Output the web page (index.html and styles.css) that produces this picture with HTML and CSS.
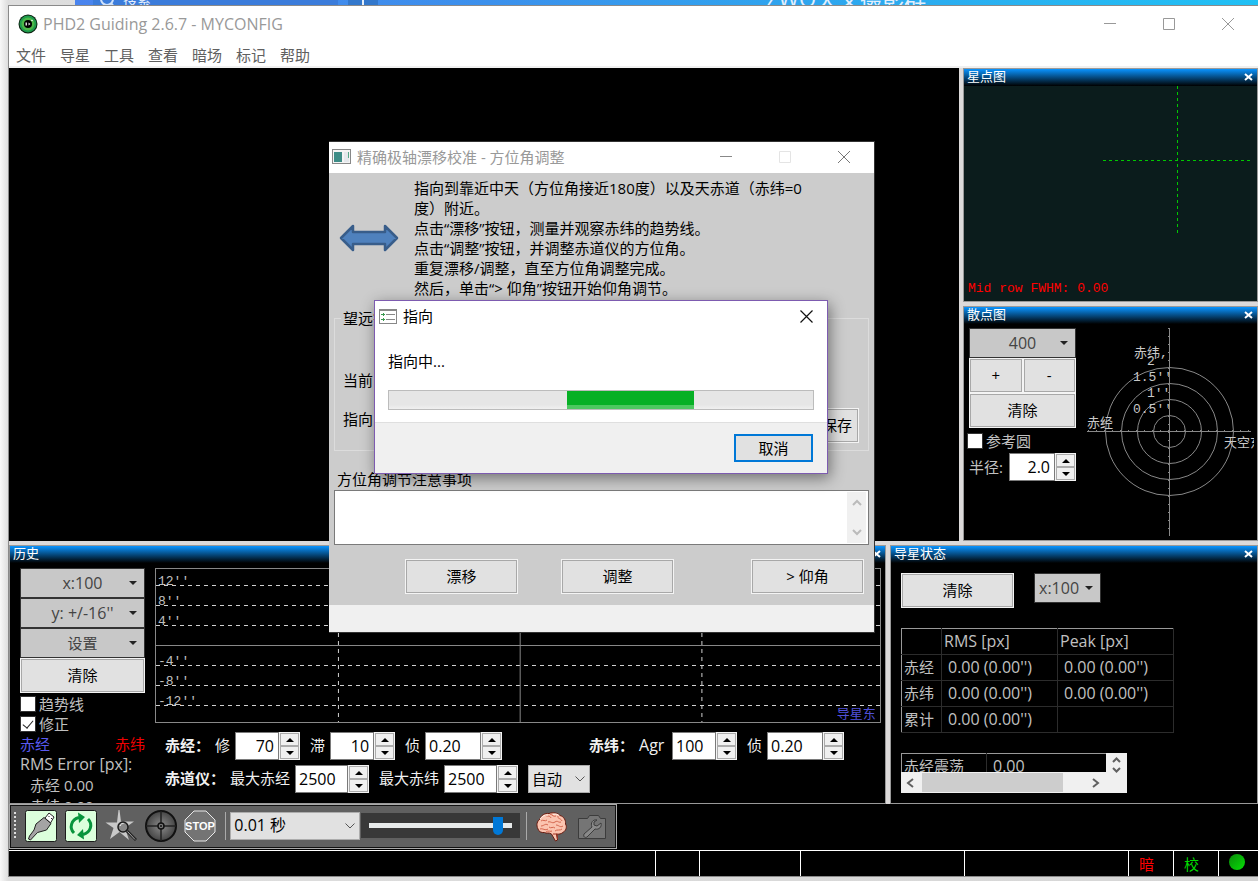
FILE: index.html
```html
<!DOCTYPE html>
<html lang="zh-CN">
<head>
<meta charset="utf-8">
<title>PHD2 Guiding 2.6.7 - MYCONFIG</title>
<link rel="stylesheet" href="styles.css">
</head>
<body>
<div class="backdrop">
  <div class="backdrop-search"><svg width="18" height="18" viewBox="0 0 18 18"><circle cx="8" cy="9" r="6" fill="none" stroke="#cfe2fb" stroke-width="2"/><path d="M12 13l4 5" stroke="#cfe2fb" stroke-width="2"/></svg><span>搜索</span></div>
  <div class="backdrop-plus"></div>
  <div class="backdrop-title">ZWO天文摄影群</div>
</div>

<main class="window">
  <header class="titlebar">
    <svg class="app-icon" width="20" height="20" viewBox="0 0 20 20"><circle cx="10" cy="10" r="9.5" fill="#0c1f10"/><circle cx="10" cy="10" r="8.5" fill="#1e9a4c"/><circle cx="10" cy="10" r="6.500" fill="#4cb848"/><circle cx="10" cy="10" r="4" fill="#000"/><path d="M7.500 8.500v3h1.500v-3zM10.500 8.500v3l2-1.500z" fill="#ddd"/><circle cx="14" cy="6.500" r=".8" fill="#fff"/></svg>
    <h1>PHD2 Guiding 2.6.7 - MYCONFIG</h1>
    <div class="window-buttons">
      <button aria-label="最小化"><svg width="12" height="12"><path d="M0 5.500h12" stroke="#999"/></svg></button>
      <button aria-label="最大化"><svg width="12" height="12"><path d="M.5.5h11v11H.5z" stroke="#999" fill="none"/></svg></button>
      <button aria-label="关闭"><svg width="12" height="12"><path d="M0 0l12 12M12 0L0 12" stroke="#999"/></svg></button>
    </div>
  </header>
  <nav class="menubar">
    <button>文件</button><button>导星</button><button>工具</button><button>查看</button><button>暗场</button><button>标记</button><button>帮助</button>
  </nav>

  <div class="dock">
    <div class="dock-top">
      <section class="camera"></section>
      <div class="side">
        <section class="panel">
          <div class="panel-head"><h2>星点图</h2><button class="close" aria-label="关闭"><svg width="9" height="8"><path d="M1 1l7 6M8 1L1 7" stroke="#fff" stroke-width="2"/></svg></button></div>
          <div class="profile">
            <svg class="profile-cross" width="148" height="148"><path d="M74.500 0v148M0 74.500h148" stroke="#00c800" stroke-dasharray="3 3"/></svg>
            <p class="profile-text">Mid row FWHM: 0.00</p>
          </div>
        </section>
        <section class="panel">
          <div class="panel-head"><h2>散点图</h2><button class="close" aria-label="关闭"><svg width="9" height="8"><path d="M1 1l7 6M8 1L1 7" stroke="#fff" stroke-width="2"/></svg></button></div>
          <div class="scatter">
            <div class="scatter-controls">
              <button class="drop">400</button>
              <div class="zoom-pair"><button class="push">+</button><button class="push">-</button></div>
              <button class="push">清除</button>
              <label class="check check-ref"><input type="checkbox">参考圆</label>
              <div class="radius"><label for="radius">半径:</label><span class="spin"><input id="radius" class="w46" value="2.0"><span class="spin-buttons"><button class="up" aria-label="增加"></button><button class="down" aria-label="减少"></button></span></span></div>
            </div>
            <svg class="scatter-plot" width="167" height="211" viewBox="0 4 167 211">
              <g fill="none" stroke="#888"><circle cx="82.500" cy="107.500" r="16"/><circle cx="82.500" cy="107.500" r="32"/><circle cx="82.500" cy="107.500" r="48"/><circle cx="82.500" cy="107.500" r="64"/><path d="M0 107.500h164M82.500 4v208"/><path d="M1 106.500h164" stroke-dasharray="1 7"/><path d="M81.500 4v208" stroke-dasharray="1 7"/></g>
              <g fill="#c8c8c8"><text x="47" y="33">赤纬,</text><text x="60" y="41">2</text><text x="46" y="57">1.5''</text><text x="60" y="73">1''</text><text x="46" y="89">0.5''</text><text x="0" y="103">赤经</text><text x="137" y="123">天空东</text></g>
            </svg>
          </div>
        </section>
      </div>
    </div>

    <div class="dock-bottom">
      <section class="panel">
        <div class="panel-head"><h2>历史</h2><button class="close" aria-label="关闭"><svg width="9" height="8"><path d="M1 1l7 6M8 1L1 7" stroke="#fff" stroke-width="2"/></svg></button></div>
        <div class="history">
          <div class="history-side">
            <button class="drop">x:100</button>
            <button class="drop">y: +/-16''</button>
            <button class="drop zh">设置</button>
            <button class="push">清除</button>
            <label class="check"><input type="checkbox">趋势线</label>
            <label class="check"><input type="checkbox" checked>修正</label>
            <div class="axes"><span class="ra">赤经</span><span class="dec">赤纬</span></div>
            <p class="rms rms-head">RMS Error [px]:</p>
            <p class="rms rms-item">赤经 0.00</p>
            <p class="rms rms-item">赤纬 0.00</p>
          </div>
          <div class="history-main">
            <svg class="graph" width="100%" height="155">
              <g stroke="#d0d0d0" stroke-dasharray="4 4">
                <line x1="0" x2="100%" y1="16.500" y2="16.500"/><line x1="0" x2="100%" y1="36.500" y2="36.500"/><line x1="0" x2="100%" y1="56.500" y2="56.500"/><line x1="0" x2="100%" y1="96.500" y2="96.500"/><line x1="0" x2="100%" y1="116.500" y2="116.500"/><line x1="0" x2="100%" y1="136.500" y2="136.500"/>
                <line x1="25.200%" x2="25.200%" y1="0" y2="155"/><line x1="75.400%" x2="75.400%" y1="0" y2="155"/>
              </g>
              <g stroke="#888"><line x1="0" x2="100%" y1="76.500" y2="76.500"/><line x1="50.300%" x2="50.300%" y1="0" y2="155"/></g>
              <g fill="#c0c0c0"><text x="2" y="16">12''</text><text x="2" y="36">8''</text><text x="2" y="56">4''</text><text x="2" y="96">-4''</text><text x="2" y="116">-8''</text><text x="2" y="136">-12''</text></g>
              <text class="guide-label" x="99.400%" y="149" text-anchor="end" fill="#5050d8">导星东</text>
            </svg>
            <div class="row">
              <strong>赤经：</strong>
              <label for="agr-ra">修</label><span class="spin"><input id="agr-ra" class="w44 right" value="70"><span class="spin-buttons"><button class="up" aria-label="增加"></button><button class="down" aria-label="减少"></button></span></span>
              <label for="hys">滞</label><span class="spin"><input id="hys" class="w44 right" value="10"><span class="spin-buttons"><button class="up" aria-label="增加"></button><button class="down" aria-label="减少"></button></span></span>
              <label for="min-ra">侦</label><span class="spin"><input id="min-ra" class="w56" value="0.20"><span class="spin-buttons"><button class="up" aria-label="增加"></button><button class="down" aria-label="减少"></button></span></span>
              <strong class="dec-group">赤纬：</strong>
              <label class="agr" for="agr-dec">Agr</label><span class="spin"><input id="agr-dec" class="w44" value="100"><span class="spin-buttons"><button class="up" aria-label="增加"></button><button class="down" aria-label="减少"></button></span></span>
              <label for="min-dec">侦</label><span class="spin"><input id="min-dec" class="w56" value="0.20"><span class="spin-buttons"><button class="up" aria-label="增加"></button><button class="down" aria-label="减少"></button></span></span>
            </div>
            <div class="row">
              <strong>赤道仪：</strong>
              <label for="max-ra">最大赤经</label><span class="spin"><input id="max-ra" class="w53" value="2500"><span class="spin-buttons"><button class="up" aria-label="增加"></button><button class="down" aria-label="减少"></button></span></span>
              <label for="max-dec">最大赤纬</label><span class="spin"><input id="max-dec" class="w53" value="2500"><span class="spin-buttons"><button class="up" aria-label="增加"></button><button class="down" aria-label="减少"></button></span></span>
              <span class="combo combo-mode"><select aria-label="赤纬模式"><option>自动</option></select><svg width="10" height="6"><path d="M.5.5L5 5 9.500.5" fill="none" stroke="#555"/></svg></span>
            </div>
          </div>
        </div>
      </section>

      <section class="panel">
        <div class="panel-head"><h2>导星状态</h2><button class="close" aria-label="关闭"><svg width="9" height="8"><path d="M1 1l7 6M8 1L1 7" stroke="#fff" stroke-width="2"/></svg></button></div>
        <div class="stats">
          <div class="stats-buttons"><button class="push">清除</button><button class="drop drop-small">x:100</button></div>
          <table class="stats-table">
            <tr><th></th><th class="latin">RMS [px]</th><th class="latin">Peak [px]</th></tr>
            <tr><th>赤经</th><td>0.00 (0.00'')</td><td>0.00 (0.00'')</td></tr>
            <tr><th>赤纬</th><td>0.00 (0.00'')</td><td>0.00 (0.00'')</td></tr>
            <tr><th>累计</th><td>0.00 (0.00'')</td><td></td></tr>
          </table>
          <div class="osc">
            <div class="osc-view"><table class="osc-table"><tr><th>赤经震荡</th><td>0.00</td></tr></table></div>
            <div class="osc-v"><svg width="9" height="16"><path d="M1 5l3.500-3.500L8 5M1 11l3.500 3.500L8 11" fill="none" stroke="#606060" stroke-width="2"/></svg></div>
            <div class="osc-h"><svg width="8" height="10"><path d="M7 1L2 5l5 4" fill="none" stroke="#606060" stroke-width="2"/></svg><span class="thumb"></span><svg width="8" height="10"><path d="M1 1l5 4-5 4" fill="none" stroke="#606060" stroke-width="2"/></svg></div>
          </div>
        </div>
      </section>
    </div>
  </div>

  <div class="toolbar-area">
    <div class="toolbar">
      <span class="grip"></span>
      <button class="tool" aria-label="连接设备"><svg width="32" height="32" viewBox="0 0 32 32"><rect x=".5" y=".5" width="31" height="31" rx="2" fill="#dcffdc" stroke="#1c1c1c"/><path d="M20 8l4-5 5 4-3.500 6z" fill="#fff" stroke="#222"/><path d="M23.500 6l1 1M26 8l1 1" stroke="#222"/><path d="M11 14l8-6.500 7 6-4.500 6.500-9 2.500-7 7.500-2-1 1-3 4.500-6z" fill="#a4a4a4" stroke="#222" stroke-linejoin="round"/></svg></button>
      <button class="tool" aria-label="循环曝光"><svg width="32" height="32" viewBox="0 0 32 32"><rect x=".5" y=".5" width="31" height="31" rx="2" fill="#dcffdc" stroke="#1c1c1c"/><path d="M9 23C4 18 6 9.500 14 7.500M23 9c5 5 3 13.500-5 15.500" fill="none" stroke="#08943c" stroke-width="3"/><path d="M13 2.500l7 4.500-6 6zM19 29.500l-7-4.500 6-6z" fill="#08943c"/></svg></button>
      <button class="tool" aria-label="自动选星"><svg width="32" height="32" viewBox="0 0 32 32"><path d="M13.500 0h1L16 11.500H29l-9 6.500 4 12-9.500-8L5 29l3.500-11-8-5.500H12z" fill="#c8c8c8"/><path d="M22 21l9 9" stroke="#222" stroke-width="3"/><path d="M22.500 21.500l7.500 8" stroke="#aaa"/><circle cx="18" cy="17" r="5" fill="#888" stroke="#1c1c1c" stroke-width="1.500"/><path d="M15 16c.5-2 2-2.500 3.500-2.500" fill="none" stroke="#fff"/></svg></button>
      <button class="tool" aria-label="开始导星"><svg width="32" height="32" viewBox="0 0 32 32"><defs><radialGradient id="wheel"><stop offset="0" stop-color="#8c8c8c"/><stop offset="1" stop-color="#444"/></radialGradient></defs><circle cx="16" cy="16" r="15" fill="url(#wheel)" stroke="#111" stroke-width="2"/><path d="M16 1v30M1 16h30" stroke="#222" stroke-width="1.500"/><circle cx="16" cy="16" r="3" fill="#777" stroke="#111" stroke-width="1.500"/><circle cx="16" cy="16" r="1" fill="#111"/></svg></button>
      <button class="tool" aria-label="停止"><svg width="32" height="32" viewBox="0 0 32 32"><path d="M10 1h12l9 9v12l-9 9H10l-9-9V10z" fill="#747474" stroke="#e8e8e8"/><text class="stop-text" x="16" y="20" text-anchor="middle">STOP</text></svg></button>
      <span class="sep"></span>
      <span class="combo combo-exposure"><select aria-label="曝光时间"><option>0.01 秒</option></select><svg width="10" height="6"><path d="M.5.5L5 5 9.500.5" fill="none" stroke="#555"/></svg></span>
      <span class="gamma"><input type="range" min="0" max="100" value="93" aria-label="伽马"></span>
      <span class="sep"></span>
      <button class="tool" aria-label="高级设置"><svg width="32" height="32" viewBox="0 0 32 32"><path d="M2 19C0 15 1 11 4 9c1-4 5-6 9-5.500C17 2 22 3 24 5.500c4 1 6 5 5.500 8.500 2 3 0 7-2 8-2 2-5 2.500-7 2l1 6-2 1-4-7c-3-2-5 0-7-1.500-3 .5-6-1-6.500-3.500z" fill="#fbc4b0" stroke="#6a1c10"/><path d="M5 11c2-2 4 1 6-1M9 5c2 2 5 0 6 3M14 4c3 1 3 3 6 2M22 6c-1 3 3 2 4 5M5 16c3 0 4-3 7-1M12 12c3-1 4 2 7 0s3 1 6 0M4 19c3-1 5 2 8 0M13 17c2 2 4-1 6 1M20 15c3 0 4 3 7 1M10 22c2-2 5 0 6-1M19 21c2-2 5 0 7-2" fill="none" stroke="#d4664e"/><path d="M4 9c2-3 5-4 8-4M17 4.500c3-1 5 0 6 1" fill="none" stroke="#fff0e8"/><path d="M17 24l4 0 .5 5" fill="none" stroke="#a03020"/></svg></button>
      <button class="tool" aria-label="相机设置"><svg width="32" height="32" viewBox="0 0 32 32"><path d="M2.500 8.500h9l2-3h9l2 3h5v20h-27z" fill="#757575" stroke="#3c3c3c"/><path d="M21 10c-4-1-7 3-5 7l-8 7c-1 3 1 4 3 3l8-8c4 1 7-2 6-6l-4 3-3-1v-3z" fill="#8a8a8a" stroke="#3c3c3c"/></svg></button>
    </div>
  </div>

  <footer class="statusbar">
    <span class="s-main"></span><span class="s44"></span><span class="s101"></span><span class="s164"></span><span class="s164"></span><span class="s45 dark-flag">暗</span><span class="s45 cal-flag">校</span><span class="s39"><i class="lamp"></i></span>
  </footer>
</main>

<section class="drift" role="dialog" aria-label="精确极轴漂移校准">
  <header class="dialog-title">
    <svg width="20" height="16" viewBox="0 0 20 16"><rect x=".5" y=".5" width="18" height="14" fill="#f4f4f4" stroke="#888"/><rect x="2" y="3" width="8" height="10" fill="#3d8c86"/><rect x="12" y="3" width="5" height="10" fill="#e4e8ec"/><path d="M16.500 3v6" stroke="#58a888"/></svg>
    <h2>精确极轴漂移校准 - 方位角调整</h2>
    <div class="window-buttons">
      <button aria-label="最小化"><svg width="12" height="12"><path d="M0 5.500h12" stroke="#888"/></svg></button>
      <button aria-label="最大化" disabled><svg width="12" height="12"><path d="M.5.5h11v11H.5z" stroke="#e4e4e4" fill="none"/></svg></button>
      <button aria-label="关闭"><svg width="12" height="12"><path d="M0 0l12 12M12 0L0 12" stroke="#777"/></svg></button>
    </div>
  </header>
  <div class="drift-body">
    <div class="intro">
      <svg width="60" height="28" viewBox="0 0 60 28"><path d="M2 14L14 2v6h32V2l12 12-12 12v-6H14v6z" fill="#4f81bd" stroke="#385d8a" stroke-width="2.500" stroke-linejoin="round"/></svg>
      <p>指向到靠近中天（方位角接近180度）以及天赤道（赤纬=0<br>度）附近。<br>点击“漂移”按钮，测量并观察赤纬的趋势线。<br>点击“调整”按钮，并调整赤道仪的方位角。<br>重复漂移/调整，直至方位角调整完成。<br>然后，单击“&gt; 仰角”按钮开始仰角调节。</p>
    </div>
    <fieldset class="scope">
      <legend>望远镜</legend>
      <p>当前</p>
      <div class="scope-slew"><span>指向</span><button class="push">保存</button></div>
    </fieldset>
    <label class="notes-label" for="notes">方位角调节注意事项</label>
    <div class="notes">
      <textarea id="notes"></textarea>
      <div class="notes-scroll"><svg width="10" height="7"><path d="M1 6l4-4 4 4" fill="none" stroke="#bbb" stroke-width="2"/></svg><svg width="10" height="7"><path d="M1 1l4 4 4-4" fill="none" stroke="#bbb" stroke-width="2"/></svg></div>
    </div>
    <div class="drift-buttons"><button class="push">漂移</button><button class="push">调整</button><button class="push last">&gt; 仰角</button></div>
  </div>
  <div class="drift-status"></div>
</section>

<section class="slew" role="dialog" aria-label="指向">
  <header class="slew-title">
    <svg width="18" height="15" viewBox="0 0 18 15"><rect x=".5" y=".5" width="17" height="14" fill="#fff" stroke="#888"/><path d="M0 1h18" stroke="#888" stroke-width="2"/><path d="M7 5.500h9M7 10.500h9" stroke="#888"/><path d="M2 5.500h4M2 10.500h4M4.500 4v3M4.500 9v3" stroke="#3a9a50"/></svg>
    <h2>指向</h2>
    <button class="slew-close" aria-label="关闭"><svg width="13" height="13"><path d="M.5.5l12 12M12.500.5l-12 12" stroke="#111" stroke-width="1.200"/></svg></button>
  </header>
  <div class="slew-body">
    <p>指向中...</p>
    <div class="progress" role="progressbar" aria-label="指向中"><span class="progress-bar"></span></div>
  </div>
  <footer class="slew-foot"><button class="cancel">取消</button></footer>
</section>
</body>
</html>
```
FILE: styles.css
```css
* { box-sizing: border-box; }
body {
  margin: 0;
  height: 100vh;
  display: flex;
  flex-direction: column;
  overflow: hidden;
  position: relative;
  padding: 0 0 4px 8px;
  background: linear-gradient(90deg, #f8f8f8, #dedede 8px, #d6d6d6);
  font: 15px/20px "Open Sans", "Noto Sans CJK SC", sans-serif;
  color: #000;
}
h1, h2, p { margin: 0; font-weight: normal; }
button, input, select, textarea { font: inherit; color: inherit; margin: 0; padding: 0; border: 0; border-radius: 0; }
button { background: none; display: flex; align-items: center; justify-content: center; }
svg { display: block; flex: none; }

.backdrop {
  flex: none;
  height: 5px;
  margin-left: 67px;
  display: flex;
  align-items: flex-end;
  background: linear-gradient(90deg, #4a84ee, #3b90ec 35%, #2fa4ee 60%, #20c0f4);
  color: #e4effc;
  overflow: hidden;
}
.backdrop-search { display: flex; align-items: flex-end; gap: 6px; width: 245px; margin: 0 0 -3px 18px; padding-left: 6px; background: #3b7cdb; font-size: 14px; line-height: 16px; }
.backdrop-plus { width: 30px; height: 5px; margin-left: 10px; background: linear-gradient(90deg, #3378cc 14px, #e4effc 14px, #e4effc 16px, #3378cc 16px); }
.backdrop-title { margin: 0 0 -4px 388px; font-size: 22px; line-height: 22px; white-space: nowrap; }

.window {
  flex: 1;
  min-height: 0;
  display: flex;
  flex-direction: column;
  border: 1px solid #8a8a8a;
  border-right: 0;
  background: #fff;
}
.titlebar { flex: none; display: flex; align-items: center; height: 36px; padding: 0 1px 0 9px; color: #999; }
.titlebar h1 { flex: 1; margin-left: 5px; font-size: 16px; }
.window-buttons { display: flex; }
.window-buttons button { width: 59px; height: 30px; }
.menubar { flex: none; display: flex; gap: 14px; height: 26px; padding: 2px 0 0 7px; border-bottom: 2px solid #f0f0f0; color: #606060; }

.dock { flex: 1; min-height: 0; display: flex; flex-direction: column; gap: 4px; background: #dcdada; }
.dock-top { flex: 1; min-height: 0; display: grid; grid-template-columns: 1fr 295px; gap: 4px; }
.dock-bottom { flex: none; height: 259px; display: grid; grid-template-columns: 1fr 368px; gap: 4px; }
.camera { background: #000; }
.side { display: grid; grid-template-rows: 234fr 235fr; gap: 4px; min-height: 0; }
.panel { min-width: 0; min-height: 0; display: flex; flex-direction: column; overflow: hidden; border: 1px solid #999; background: #000; color: #c0c0c0; }
.panel-head { flex: none; display: flex; align-items: center; justify-content: space-between; height: 17px; padding: 0 4px 0 3px; background: linear-gradient(#0a94ff, #000); color: #fff; }
.panel-head h2 { padding-bottom: 4px; font-size: 13px; line-height: 16px; }
.close { width: 9px; height: 16px; padding-bottom: 2px; }

.push { height: 35px; padding-bottom: 2px; border: 1px solid #f4f4f4; box-shadow: inset 0 0 0 1px #a8a8a8; background: #e1e1e1; color: #000; }
.drop { position: relative; height: 30px; padding-bottom: 1px; border: 1px solid #333; background: #c8c8c8; color: #444; font-size: 16px; }
.drop.zh { font-size: 15px; }
.drop::after { content: ""; position: absolute; right: 7px; top: 12px; border: 4px solid transparent; border-top-color: #222; border-bottom: 0; }

.profile { flex: 1; display: flex; flex-direction: column; justify-content: space-between; background: #0b1c1c; }
.profile-cross { align-self: flex-end; margin-right: 6px; }
.profile-text { padding: 0 0 2px 4px; color: #f00; font: 13px/20px "Liberation Mono", monospace; }

.scatter { flex: 1; display: flex; justify-content: space-between; padding: 4px 3px 0 5px; overflow: hidden; }
.scatter-controls { width: 107px; display: flex; flex-direction: column; }
.zoom-pair { display: grid; grid-template-columns: 1fr 1fr; }
.scatter-plot { overflow: hidden; }
svg text { font: 13px "Liberation Mono", "Noto Sans CJK SC", monospace; }
.check { display: flex; align-items: center; gap: 3px; height: 20px; }
.check input { appearance: none; width: 16px; height: 16px; border: 1px solid #333; background: #fff; display: grid; place-items: center; }
.check input:checked::after { content: ""; width: 5px; height: 9px; margin-bottom: 3px; border: solid #222; border-width: 0 1px 1px 0; transform: rotate(40deg); }
.check-ref { margin: 3px 0 2px -2px; }
.radius { display: flex; align-items: center; justify-content: space-between; }
.spin { display: flex; height: 28px; }
.spin input { padding: 0 4px 1px 3px; border: 1px solid #7a7a7a; background: #fff; color: #000; font-size: 16px; }
.spin .right, #radius { text-align: right; }
.spin-buttons { display: grid; grid-template-rows: 1fr 1fr; width: 21px; border: 1px solid #f4f4f4; background: #f4f4f4; }
.spin-buttons button { border: 1px solid #acacac; background: #f0f0f0; }
.up::after, .down::after { content: ""; border: 4px solid transparent; }
.up::after { border-top: 0; border-bottom-color: #000; }
.down::after { border-bottom: 0; border-top-color: #000; }
.w44 { width: 44px; }
.w46 { width: 46px; }
.w53 { width: 53px; }
.w56 { width: 56px; }

.history { flex: 1; min-height: 0; display: flex; gap: 10px; padding: 5px 4px 0 10px; overflow: hidden; }
.history-side { flex: none; width: 125px; display: flex; flex-direction: column; }
.history-side > * { flex: none; }
.history-side .check:first-of-type { margin-top: 1px; }
.axes { display: flex; justify-content: space-between; height: 20px; }
.ra { color: #5a5af0; }
.dec { color: #e00; }
.rms { height: 21px; }
.rms-head { font-size: 16px; }
.rms-item { padding-left: 10px; }
.history-main { flex: 1; min-width: 0; display: flex; flex-direction: column; }
.graph { border: 1px solid #888; margin-bottom: 9px; }
.row { display: flex; align-items: center; height: 28px; margin-bottom: 5px; padding-left: 10px; color: #f0f0f0; white-space: nowrap; }
.row strong { width: 50px; padding-bottom: 2px; font-weight: bold; }
.row + .row strong { width: 65px; }
.row label { margin-right: 5px; padding-bottom: 2px; }
.row .agr { width: 28px; font-size: 16px; }
.row .spin { margin-right: 10px; }
.row .dec-group { margin-left: 77px; }
.combo { display: grid; align-items: center; }
.combo > * { grid-area: 1 / 1; }
.combo > svg { justify-self: end; margin-right: 5px; pointer-events: none; }
.combo select { appearance: none; width: 100%; height: 28px; padding: 0 0 1px 3px; border: 1px solid #acacac; background: #e1e1e1; color: #000; }
.combo-mode { width: 62px; }

.stats { padding: 10px 0 0 10px; }
.stats-buttons { display: flex; gap: 20px; height: 35px; }
.stats-buttons .push { width: 113px; }
.drop-small { width: 67px; justify-content: flex-start; padding-left: 4px; }
table { border-collapse: collapse; }
th, td { padding: 0 2px 2px; height: 26px; border: 1px solid #2c2c2c; text-align: left; font-weight: normal; }
td { padding-left: 6px; font-size: 16px; }
.latin { font-size: 16px; }
.stats-table { width: 273px; margin-top: 20px; border-top: 1px solid #999; border-left: 1px solid #999; table-layout: fixed; }
.stats-table th:first-child { width: 40px; border-left-color: #999; }
.stats-table tr:first-child th { border-top-color: #999; }
.osc { display: grid; grid-template: 19px 21px / 205px 21px; width: 226px; margin-top: 20px; background: #f0f0f0; }
.osc-view { overflow: hidden; background: #000; }
.osc-table { width: 206px; }
.osc-table th { width: 85px; white-space: nowrap; border-left-color: #999; }
.osc-table th, .osc-table td { border-top-color: #999; }
.osc-v { grid-row: 1 / 3; grid-column: 2; padding: 4px 0 0 6px; }
.osc-h { display: flex; align-items: center; padding-left: 5px; }
.thumb { width: 141px; height: 19px; margin: 0 29px 0 8px; background: #cdcdcd; }

.toolbar-area { flex: none; height: 46px; background: #000; }
.toolbar { display: flex; align-items: center; width: 608px; height: 45px; padding: 0 0 2px 4px; border: 1px solid #aaa; box-shadow: inset 0 0 0 1px #111; background: #606060; }
.grip { width: 2px; height: 28px; margin-right: 9px; background: repeating-linear-gradient(#ddd 0 2px, transparent 2px 4px); }
.tool { width: 40px; height: 32px; justify-content: flex-start; }
.stop-text { font: bold 11px "Liberation Sans", sans-serif; fill: #fff; }
.sep { width: 1px; height: 28px; margin: 0 4px 0 1px; background: #aaa; }
.combo-exposure { width: 130px; font-size: 16px; }
.gamma { width: 160px; height: 25px; margin: 0 5px 0 1px; padding: 0 8px; background: #383838; display: flex; align-items: center; }
.gamma input { appearance: none; width: 100%; height: 5px; background: #e7eaea; }
.gamma input::-webkit-slider-thumb { appearance: none; width: 10px; height: 18px; background: #0078d7; border-radius: 0 0 5px 5px; }
.gamma + .sep { margin-right: 9px; }

.statusbar { flex: none; display: flex; height: 26px; border-top: 1px solid #fff; background: #000; font-size: 15px; }
.statusbar span { display: flex; align-items: center; border-left: 1px solid #fff; }
.statusbar .s-main { flex: 1; border-left: 0; }
.statusbar .s39 { width: 40px; padding: 0 0 4px 10px; }
.s44 { width: 44px; }
.s45 { width: 45px; padding-left: 10px; }
.s101 { width: 101px; }
.s164 { width: 164px; }
.dark-flag { color: #f00; }
.cal-flag { color: #0d0; }
.lamp { width: 16px; height: 16px; border-radius: 50%; background: linear-gradient(135deg, #0a8a0a, #06e006); }

.drift { position: absolute; left: 329px; top: 141px; width: 546px; display: flex; flex-direction: column; border: 1px solid #333; border-left: 0; background: #ccc; }
.dialog-title { display: flex; align-items: center; height: 31px; padding: 0 1px 1px 3px; background: #fff; color: #999; }
.dialog-title h2 { flex: 1; margin-left: 5px; font-size: 15px; }
.drift-body { display: flex; flex-direction: column; height: 432px; padding: 5px 5px 0; }
.intro { display: flex; align-items: center; gap: 15px; height: 120px; padding-left: 5px; }
.intro svg { margin-bottom: 1px; }
.intro p { white-space: nowrap; }
.scope { height: 143px; margin: 10px 0 0; padding: 42px 9px 0 8px; border: 1px solid #dcdcdc; min-width: 0; }
.scope legend { margin-left: -2px; padding: 0 2px; }
.scope-slew { display: flex; align-items: center; justify-content: space-between; margin-top: 18px; }
.scope-slew .push { width: 44px; }
.scope-slew span { margin-bottom: 14px; }
.notes-label { margin: 18px 0 1px 3px; line-height: 20px; }
.notes { display: flex; height: 55px; border: 1px solid #7a7a7a; background: #fff; }
.notes textarea { flex: 1; resize: none; outline: 0; background: #fff; }
.notes-scroll { width: 19px; margin: 1px 2px 1px 0; display: flex; flex-direction: column; align-items: center; justify-content: space-between; padding: 7px 0; background: #f0f0f0; }
.drift-buttons { display: flex; gap: 43px; margin-top: 14px; padding: 0 5px 0 71px; }
.drift-buttons .push { width: 113px; }
.drift-buttons .last { margin-left: auto; }
.drift-status { height: 27px; background: #f0f0f0; }

.slew { position: absolute; left: 374px; top: 300px; width: 454px; display: flex; flex-direction: column; border: 1px solid #7d5bb0; background: #fff; box-shadow: 2px 4px 14px rgba(0, 0, 0, .45); }
.slew-title { display: flex; align-items: center; height: 31px; padding: 0 0 1px 4px; }
.slew-title h2 { flex: 1; margin-left: 6px; font-size: 15px; }
.slew-close { width: 42px; height: 30px; }
.slew-body { padding: 19px 13px 12px; }
.slew-body p { height: 20px; margin-bottom: 19px; }
.progress { height: 20px; border: 1px solid #bcbcbc; background: linear-gradient(#e6e6e6 75%, #f0f0f0); display: flex; }
.progress-bar { width: 30%; margin-left: 42%; background: linear-gradient(#06b025 80%, #4cc860 80%); }
.slew-foot { display: flex; justify-content: flex-end; height: 51px; padding: 11px 14px 0 0; border-top: 1px solid #dfdfdf; background: #f0f0f0; }
.cancel { width: 79px; height: 28px; padding-bottom: 1px; border: 2px solid #0078d7; background: #e1e1e1; }
```
